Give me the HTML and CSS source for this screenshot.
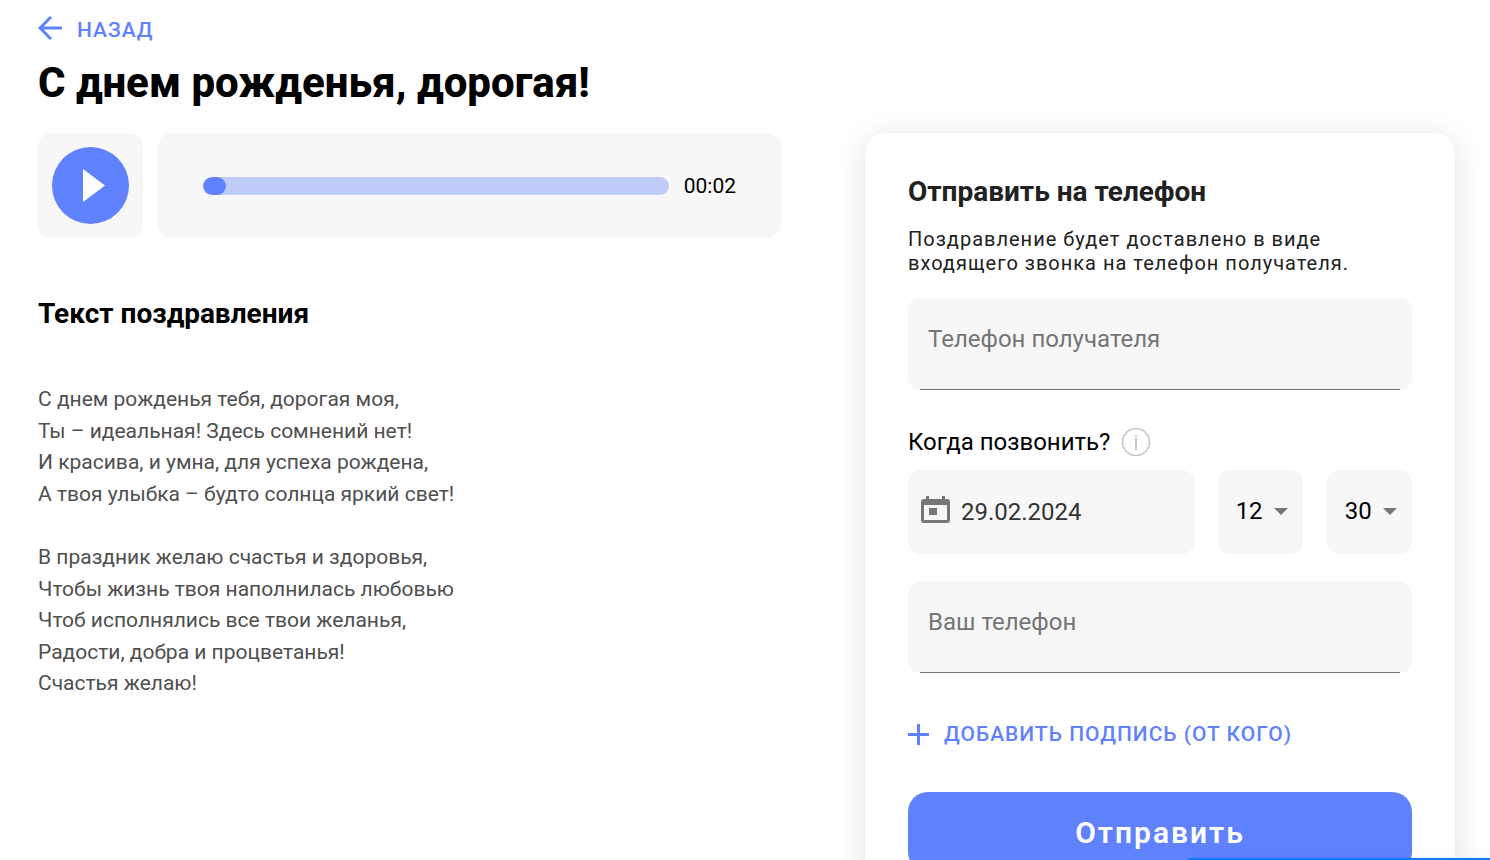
FILE: index.html
```html
<!DOCTYPE html>
<html lang="ru">
<head>
  <meta charset="UTF-8">
  <meta name="viewport" content="width=device-width, initial-scale=1.0">
  <title>С днем рожденья, дорогая!</title>
  <link rel="stylesheet" href="styles.css">
</head>
<body>

  <main class="page">
    <header class="page-header">
      <a class="back-link" href="#">
        <svg width="25" height="24" viewBox="0 0 25 24" fill="none" stroke="currentColor" stroke-width="3">
          <path d="M24 12H2M13 1L2 12l11 11"/>
        </svg>
        <span>НАЗАД</span>
      </a>
      <h1>С днем рожденья, дорогая!</h1>
    </header>

    <div class="columns">
      <section class="greeting">
        <div class="player">
          <div class="play-box">
            <button class="play-btn" type="button" aria-label="Слушать">
              <svg width="77" height="77" viewBox="0 0 77 77" fill="#fff">
                <path d="M31 22v33l22-16.500z"/>
              </svg>
            </button>
          </div>
          <div class="track-box">
            <progress class="track" value="5" max="100" aria-label="Прогресс"></progress>
            <span class="time">00:02</span>
          </div>
        </div>

        <h2>Текст поздравления</h2>
        <p class="verse">С днем рожденья тебя, дорогая моя,<br>
          Ты – идеальная! Здесь сомнений нет!<br>
          И красива, и умна, для успеха рождена,<br>
          А твоя улыбка – будто солнца яркий свет!</p>
        <p class="verse">В праздник желаю счастья и здоровья,<br>
          Чтобы жизнь твоя наполнилась любовью<br>
          Чтоб исполнялись все твои желанья,<br>
          Радости, добра и процветанья!<br>
          Счастья желаю!</p>
      </section>

      <form class="card">
        <h2>Отправить на телефон</h2>
        <p class="card-text">Поздравление будет доставлено в виде входящего звонка на телефон получателя.</p>

        <div class="field">
          <input type="tel" aria-label="Телефон получателя" placeholder="Телефон получателя">
        </div>

        <div class="when">
          <label for="date">Когда позвонить?</label>
          <svg width="30" height="30" viewBox="0 0 30 30" fill="none" stroke="#c4c4c4">
            <circle cx="15" cy="15" r="13.500" stroke-width="1.500"/>
            <path d="M15 11v12M15 8v1.500" stroke="#aaa" stroke-width="1.300"/>
          </svg>
        </div>

        <div class="schedule">
          <div class="date-box">
            <svg width="29" height="32" viewBox="0 0 29 32">
              <path fill="#757575" fill-rule="evenodd" d="M5 0h3v3h13V0h3v3h2a3 3 0 0 1 3 3v18a3 3 0 0 1-3 3H3a3 3 0 0 1-3-3V6a3 3 0 0 1 3-3h2zM3 9v15h23V9zM8 12h8v7H8z"/>
            </svg>
            <input id="date" type="text" value="29.02.2024">
          </div>
          <div class="select-box">
            <select aria-label="Часы"><option>12</option></select>
          </div>
          <div class="select-box">
            <select aria-label="Минуты"><option>30</option></select>
          </div>
        </div>

        <div class="field">
          <input type="tel" aria-label="Ваш телефон" placeholder="Ваш телефон">
        </div>

        <button class="add-btn" type="button">
          <svg width="21" height="21" viewBox="0 0 21 21" fill="none" stroke="currentColor" stroke-width="3">
            <path d="M10.500 0v21M0 10.500h21"/>
          </svg>
          ДОБАВИТЬ ПОДПИСЬ (ОТ КОГО)
        </button>

        <button class="send-btn" type="submit">Отправить</button>
      </form>
    </div>
  </main>

  <div class="chat-bar"></div>

</body>
</html>
```
FILE: styles.css
```css
:root {
  --primary: #6082ff;
  --track: #bfccf8;
  --box: #f7f7f7;
  --muted: #757575;
}
* {
  box-sizing: border-box;
}
body {
  margin: 0;
  font-family: Roboto, sans-serif;
  background: #fff;
  color: #000;
}
h1, h2, p {
  margin: 0;
}
button, input, select {
  font-family: inherit;
  border: none;
  background: none;
  padding: 0;
}
button {
  cursor: pointer;
}
svg {
  flex: none;
  display: block;
}
.page {
  padding: 16px 35px 40px 38px;
}
.back-link {
  display: flex;
  align-items: flex-start;
  gap: 14px;
  color: var(--primary);
  font-size: 21px;
  font-weight: 500;
  line-height: 28px;
  letter-spacing: 1px;
  text-decoration: none;
}
h1 {
  margin-top: 15px;
  font-size: 42px;
  font-weight: 800;
  line-height: 48px;
}
h2 {
  font-size: 28px;
  line-height: 32px;
}
.columns {
  display: grid;
  grid-template-columns: 743fr 590fr;
  gap: 84px;
  align-items: start;
  margin-top: 26px;
}

/* player */
.player {
  display: flex;
  gap: 15px;
  margin-bottom: 60px;
}
.play-box {
  padding: 14px;
  border-radius: 14px;
  background: var(--box);
}
.play-btn {
  display: block;
  border-radius: 50%;
  background: var(--primary);
}
.track-box {
  flex: 1;
  display: flex;
  align-items: center;
  gap: 15px;
  padding: 0 45px;
  border-radius: 14px;
  background: var(--box);
}
.track {
  appearance: none;
  flex: 1;
  min-width: 0;
  height: 18px;
  border: none;
  border-radius: 9px;
  overflow: hidden;
  background: var(--track);
}
.track::-webkit-progress-bar {
  background: var(--track);
}
.track::-webkit-progress-value {
  border-radius: 9px;
  background: var(--primary);
}
.time {
  font-size: 21px;
}

/* greeting text */
.greeting h2 {
  margin-bottom: 54px;
}
.verse {
  margin-bottom: 32px;
  color: #4f4f4f;
  font-size: 21px;
  line-height: 1.5;
}

/* order card */
.card {
  padding: 43px;
  border-radius: 20px;
  background: #fff;
  box-shadow: 0 4px 30px rgba(0, 0, 0, 0.12);
}
.card h2 {
  color: #212121;
}
.card-text {
  margin: 19px 0 23px;
  color: #212121;
  font-size: 20px;
  line-height: 24px;
  letter-spacing: 1px;
}
.field {
  display: flex;
  height: 92px;
  padding: 0 12px;
  border-radius: 12px;
  background: var(--box);
}
.field input {
  flex: 1;
  min-width: 0;
  padding: 0 8px 10px;
  border-bottom: 1px solid var(--muted);
  font-size: 24px;
}
.field input::placeholder {
  color: var(--muted);
}
.when {
  display: flex;
  align-items: center;
  gap: 11px;
  margin: 37px 0 13px;
  font-size: 24px;
}
.schedule {
  display: grid;
  grid-template-columns: 285fr 85fr 85fr;
  gap: 24px;
  margin-bottom: 27px;
}
.date-box,
.select-box {
  display: flex;
  align-items: center;
  min-width: 0;
  height: 84px;
  border-radius: 12px;
  background: var(--box);
}
.date-box {
  gap: 11px;
  padding: 0 13px;
}
.date-box input {
  flex: 1;
  min-width: 0;
  color: #333;
  font-size: 24px;
}
.select-box {
  position: relative;
  padding-bottom: 2px;
}
.select-box select {
  appearance: none;
  width: 100%;
  height: 100%;
  padding-left: 18px;
  color: #000;
  font-size: 24px;
}
.select-box::after {
  content: "";
  position: absolute;
  right: 15px;
  border: 7px solid transparent;
  border-top-color: var(--muted);
  border-bottom: none;
  pointer-events: none;
}
.add-btn {
  display: flex;
  align-items: center;
  gap: 15px;
  margin: 48px 0 45px;
  color: var(--primary);
  font-size: 21px;
  font-weight: 500;
  line-height: 26px;
  letter-spacing: 1px;
}
.send-btn {
  width: 100%;
  height: 80px;
  border-radius: 20px;
  background: var(--primary);
  color: #fff;
  font-size: 30px;
  font-weight: 600;
  letter-spacing: 2px;
}

/* collapsed chat widget at the window edge */
.chat-bar {
  position: fixed;
  right: 0;
  bottom: 0;
  width: 302px;
  height: 2px;
  border-top-left-radius: 8px;
  background: #0a7cff;
  box-shadow: 0 0 20px rgba(0, 0, 0, 0.12);
}
```
